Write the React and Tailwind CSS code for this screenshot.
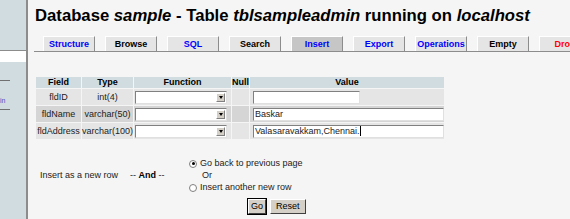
import React from 'react'

const tabs = [
  { label: 'Structure', color: 'text-[#0000ff]' },
  { label: 'Browse', color: 'text-black' },
  { label: 'SQL', color: 'text-[#0000ff]' },
  { label: 'Search', color: 'text-black' },
  { label: 'Insert', color: 'text-[#0000ff]', active: true },
  { label: 'Export', color: 'text-[#0000ff]' },
  { label: 'Operations', color: 'text-[#0000ff]' },
  { label: 'Empty', color: 'text-black' },
  { label: 'Drop', color: 'text-[#ff0000]' },
]

const rows = [
  { field: 'fldID', type: 'int(4)', value: '', bg: 'bg-[#e5e5e5]', short: true },
  { field: 'fldName', type: 'varchar(50)', value: 'Baskar', bg: 'bg-[#d5d5d5]' },
  { field: 'fldAddress', type: 'varchar(100)', value: 'Valasaravakkam,Chennai.', bg: 'bg-[#e5e5e5]', caret: true },
]

function Select() {
  return (
    <div className="flex h-[13px] w-[92px] bg-white border border-t-[#808080] border-l-[#808080] border-r-[#e0e0e0] border-b-[#e0e0e0]">
      <div className="flex-1" />
      <div className="w-[9px] my-[1px] mr-[1px] bg-[#d4d0c8] border border-t-white border-l-white border-r-[#808080] border-b-[#808080] flex items-center justify-center">
        <div className="w-0 h-0 border-l-[2.5px] border-r-[2.5px] border-t-[3px] border-l-transparent border-r-transparent border-t-black" />
      </div>
    </div>
  )
}

function Radio({ checked }) {
  return (
    <span className="inline-flex w-[8px] h-[8px] rounded-full bg-white border border-[#808080] items-center justify-center mr-[3px]">
      {checked && <span className="w-[3px] h-[3px] rounded-full bg-black" />}
    </span>
  )
}

export default function App() {
  return (
    <div className="w-[570px] h-[219px] flex overflow-hidden bg-[#f5f5f5] text-[9px] leading-none text-black" style={{ fontFamily: '"Liberation Sans", Arial, sans-serif' }}>
      <div className="w-[28px] shrink-0 bg-[#d0dce0] border-r-2 border-[#8c8c8c] flex flex-col">
        <div className="h-[50px]" />
        <div className="h-[12px] bg-white border-t border-[#8c8c8c]" />
        <div className="h-[18px]" />
        <div className="w-[10px] h-px bg-[#707070]" />
        <div className="h-[16px]" />
        <div className="text-[7px] text-[#5050c0]">in</div>
        <div className="h-[5px]" />
        <div className="w-[10px] h-px bg-[#707070]" />
      </div>

      <div className="flex-1 flex flex-col pl-[6px]">
        <div className="mt-[8px] h-[16px] text-[16.7px] font-bold leading-none whitespace-nowrap pl-[1px]">
          Database <i>sample</i> - Table <i>tblsampleadmin</i> running on <i>localhost</i>
        </div>

        <div className="mt-[12px] flex gap-[10px] pl-[9px] border-b border-[#8c8c8c] h-[16px]">
          {tabs.map((t) => (
            <div
              key={t.label}
              className={`w-[52px] shrink-0 h-[15px] flex items-center justify-center font-bold border border-t-white border-l-white border-r-[#8c8c8c] border-b-0 ${t.active ? 'bg-[#c6c6c6]' : 'bg-[#e5e5e5]'} ${t.color}`}
            >
              {t.label}
            </div>
          ))}
        </div>

        <table className="self-start mt-[24px] ml-[1px] border-separate border-spacing-[1px] text-[9px]">
          <thead>
            <tr className="bg-[#d0dce0] font-bold h-[11px]">
              <th className="w-[45px] p-0 font-bold">Field</th>
              <th className="w-[51px] p-0 font-bold">Type</th>
              <th className="w-[97px] p-0 font-bold">Function</th>
              <th className="w-[16px] p-0 font-bold">Null</th>
              <th className="w-[194px] p-0 font-bold">Value</th>
            </tr>
          </thead>
          <tbody>
            {rows.map((r) => (
              <tr key={r.field} className={`${r.bg} h-[16px]`}>
                <td className="p-0 text-center whitespace-nowrap text-[#222]">{r.field}</td>
                <td className="p-0 text-center whitespace-nowrap text-[#222]">{r.type}</td>
                <td className="p-0 pl-[1px]"><Select /></td>
                <td className="p-0" />
                <td className="p-0 pl-[3px]">
                  <div className={`h-[13px] bg-white border border-t-[#808080] border-l-[#808080] border-r-[#e0e0e0] border-b-[#e0e0e0] flex items-center pl-[1px] text-[#222] ${r.short ? 'w-[107px]' : 'w-[191px]'}`}>
                    {r.value}
                    {r.caret && <span className="w-px h-[10px] bg-black ml-[1px]" />}
                  </div>
                </td>
              </tr>
            ))}
          </tbody>
        </table>

        <div className="mt-[19px] flex items-center text-[#222]">
          <div className="w-[96px] pl-[6px]">Insert as a new row</div>
          <div className="w-[59px]">-- <b className="text-black">And</b> --</div>
          <div className="flex flex-col gap-[3px]">
            <div className="flex items-center"><Radio checked />Go back to previous page</div>
            <div className="pl-[13px]">Or</div>
            <div className="flex items-center"><Radio />Insert another new row</div>
          </div>
        </div>

        <div className="mt-[7px] flex gap-[4px] pl-[214px]">
          <div className="h-[15px] px-[2px] bg-[#d4d0c8] border border-t-white border-l-white border-r-[#404040] border-b-[#404040] outline outline-1 outline-black flex items-center">Go</div>
          <div className="h-[15px] px-[5px] bg-[#d4d0c8] border border-t-white border-l-white border-r-[#404040] border-b-[#404040] flex items-center">Reset</div>
        </div>
      </div>
    </div>
  )
}
